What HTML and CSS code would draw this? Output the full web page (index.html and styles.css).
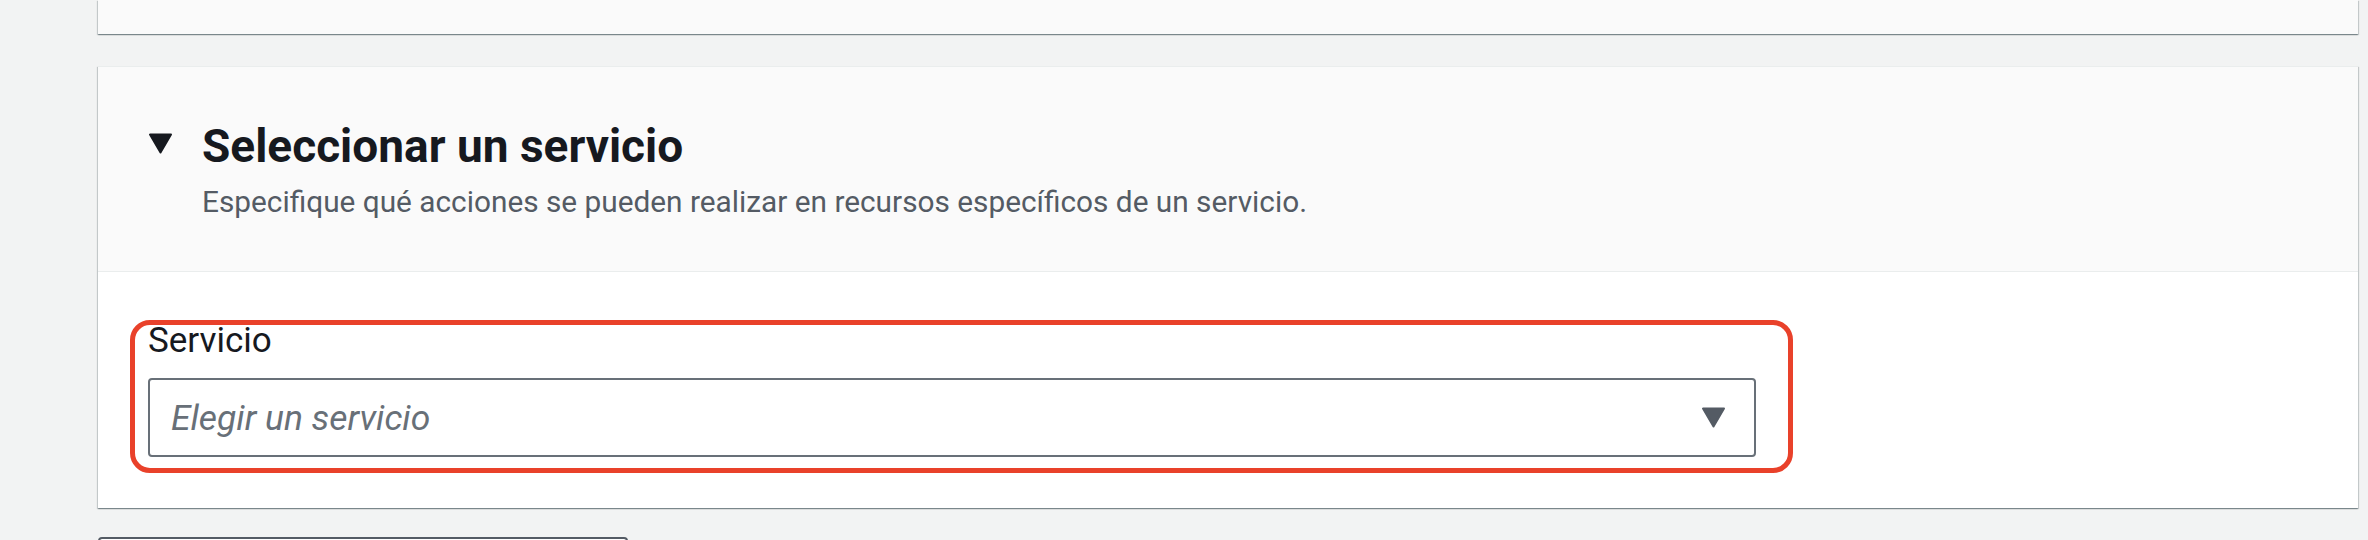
FILE: index.html
```html
<!DOCTYPE html>
<html lang="es">
<head>
<meta charset="utf-8">
<title>Seleccionar un servicio</title>
<link rel="stylesheet" href="styles.css">
</head>
<body>
<div class="page">
  <section class="card card-prev"></section>
  <section class="card">
    <div class="card-header">
      <svg class="expand-caret" width="25" height="21" viewBox="0 0 25 21" aria-hidden="true">
        <path d="M2 1.5 H23 L12.5 19.5 Z" fill="#16191f" stroke="#16191f" stroke-width="2" stroke-linejoin="round"/>
      </svg>
      <div class="header-text">
        <h2 class="title">Seleccionar un servicio</h2>
        <p class="description">Especifique qué acciones se pueden realizar en recursos específicos de un servicio.</p>
      </div>
    </div>
    <div class="card-body">
      <div class="field">
        <label class="field-label">Servicio</label>
        <div class="select">
          <span class="placeholder">Elegir un servicio</span>
          <svg class="select-caret" width="25" height="21" viewBox="0 0 25 21" aria-hidden="true">
            <path d="M2 1.5 H23 L12.5 19.5 Z" fill="#545b64" stroke="#545b64" stroke-width="2" stroke-linejoin="round"/>
          </svg>
        </div>
        <div class="highlight"></div>
      </div>
    </div>
  </section>
  <div class="next-button"></div>
</div>
</body>
</html>
```
FILE: styles.css
```css
html, body {
  margin: 0;
  padding: 0;
}
body {
  background: #f2f3f3;
  font-family: Roboto, "Liberation Sans", sans-serif;
  color: #16191f;
  overflow: hidden;
}
.page {
  padding: 0 10px 0 98px;
}
.card {
  background: #ffffff;
  box-shadow: 0 1px 1px 0 rgba(0, 28, 36, 0.3), 1px 1px 1px 0 rgba(0, 28, 36, 0.15), -1px 1px 1px 0 rgba(0, 28, 36, 0.15);
}
.card-prev {
  height: 34px;
  background: #fafafa;
  margin-bottom: 32px;
}
.card-prev + .card {
  border-top: 1px solid #eaeded;
}
.card-header {
  display: flex;
  align-items: flex-start;
  gap: 29px;
  background: #fafafa;
  padding: 51px 50px 49px 50px;
  border-bottom: 1px solid #eaeded;
}
.expand-caret {
  flex: none;
  margin-top: 15px;
}
.header-text {
  display: flex;
  flex-direction: column;
  gap: 8px;
}
.title {
  margin: 0;
  font-size: 46px;
  line-height: 56px;
  font-weight: 700;
  color: #16191f;
}
.description {
  margin: 0;
  font-size: 29.8px;
  line-height: 40px;
  color: #545b64;
}
.card-body {
  padding: 49px 50px 51px 50px;
}
.field {
  position: relative;
  width: 1608px;
  display: flex;
  flex-direction: column;
  gap: 17px;
}
.field-label {
  font-size: 35px;
  line-height: 40px;
  color: #16191f;
}
.select {
  box-sizing: border-box;
  height: 79px;
  border: 2px solid #687078;
  border-radius: 4px;
  background: #ffffff;
  display: flex;
  align-items: center;
  justify-content: space-between;
  padding: 0 28px 0 21px;
}
.placeholder {
  font-size: 35.4px;
  line-height: 40px;
  font-style: italic;
  color: #687078;
}
.select-caret {
  flex: none;
}
.highlight {
  position: absolute;
  top: -1px;
  left: -18px;
  right: -37px;
  bottom: -16px;
  border: 5px solid #e9412a;
  border-radius: 20px;
  pointer-events: none;
}
.next-button {
  margin-top: 29px;
  width: 530px;
  height: 40px;
  box-sizing: border-box;
  border: 2px solid #545b64;
  border-radius: 4px;
  background: #ffffff;
}
```
